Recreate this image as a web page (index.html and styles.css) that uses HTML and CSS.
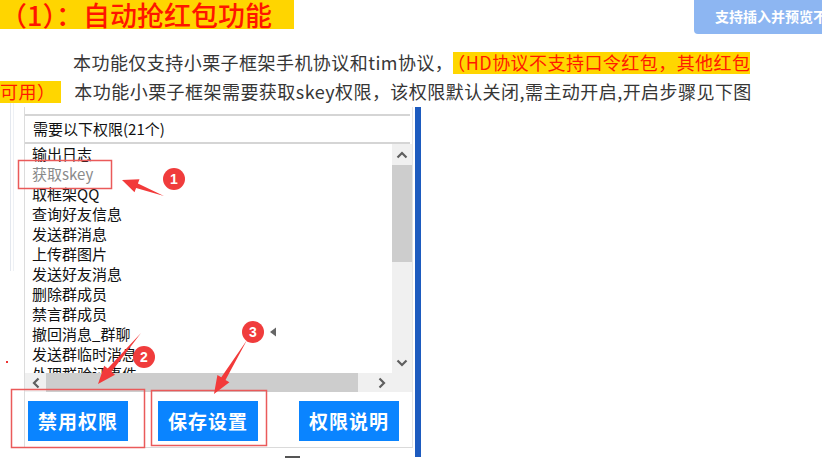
FILE: index.html
```html
<!DOCTYPE html>
<html lang="zh-CN">
<head>
<meta charset="utf-8">
<title>自动抢红包功能</title>
<link rel="stylesheet" href="styles.css">
</head>
<body>
<div class="page">
  <header class="top">
    <h1 class="title">（1）：自动抢红包功能</h1>
    <div class="preview-btn">支持插入并预览不</div>
  </header>
  <p class="intro">本功能仅支持小栗子框架手机协议和tim协议，<span class="hl">（HD协议不支持口令红包，其他红包<br>可用）</span><span class="gap"></span>本功能小栗子框架需要获取skey权限，该权限默认关闭,需主动开启,开启步骤见下图</p>
  <div class="shot">
    <div class="ghost"></div>
    <div class="panel">
      <div class="hdr">需要以下权限(21个)</div>
      <div class="listbox">
        <ul class="list">
          <li>输出日志</li>
          <li class="off">获取skey</li>
          <li>取框架QQ</li>
          <li>查询好友信息</li>
          <li>发送群消息</li>
          <li>上传群图片</li>
          <li>发送好友消息</li>
          <li>删除群成员</li>
          <li>禁言群成员</li>
          <li>撤回消息_群聊</li>
          <li>发送群临时消息</li>
          <li>处理群验证事件</li>
        </ul>
        <div class="vscroll">
          <div class="arrow-v"><svg width="12" height="8" viewBox="0 0 12 8"><polyline points="1.5,6.5 6,2 10.5,6.5" fill="none" stroke="#5f5f5f" stroke-width="2.2"/></svg></div>
          <div class="vthumb"></div>
          <div class="vfill"></div>
          <div class="arrow-v"><svg width="12" height="8" viewBox="0 0 12 8"><polyline points="1.5,1.5 6,6 10.5,1.5" fill="none" stroke="#5f5f5f" stroke-width="2.2"/></svg></div>
        </div>
        <div class="hscroll">
          <div class="arrow-h"><svg width="8" height="12" viewBox="0 0 8 12"><polyline points="6.5,1.5 2,6 6.5,10.5" fill="none" stroke="#5f5f5f" stroke-width="2.2"/></svg></div>
          <div class="hthumb"></div>
          <div class="hfill"></div>
          <div class="arrow-h"><svg width="8" height="12" viewBox="0 0 8 12"><polyline points="1.5,1.5 6,6 1.5,10.5" fill="none" stroke="#5f5f5f" stroke-width="2.2"/></svg></div>
        </div>
        <div class="corner"></div>
      </div>
      <div class="btns">
        <div class="btn">禁用权限</div>
        <div class="btn">保存设置</div>
        <div class="btn btn-wide">权限说明</div>
      </div>
    </div>
    <div class="bluebar"></div>
  </div>
  <svg class="annot" width="822" height="468" viewBox="0 0 822 468">
    <rect x="18.5" y="160.5" width="93" height="28" fill="none" stroke="#ea5a5a" stroke-width="1.5"/>
    <rect x="11.5" y="389.5" width="133" height="58" fill="none" stroke="#ea5a5a" stroke-width="1.5"/>
    <rect x="151.5" y="390.5" width="115" height="55" fill="none" stroke="#ea5a5a" stroke-width="1.5"/>
    <polygon points="122,180 139.5,179.2 137.9,183.4 164,196 136.1,188 134.5,192.2" fill="#f23a3a"/>
    <polygon points="98,384 115,374.7 111.5,371.8 141,333 107.7,368.6 104.2,365.7" fill="#f23a3a"/>
    <polygon points="214,394 229.4,382.2 225.5,379.9 247,340 221.3,377.3 217.4,375" fill="#f23a3a"/>
    <circle cx="174" cy="179" r="11" fill="#f03c3c"/>
    <circle cx="144" cy="357" r="11" fill="#f03c3c"/>
    <circle cx="253" cy="332" r="11" fill="#f03c3c"/>
    <text x="174" y="184" class="badge">1</text>
    <text x="144" y="362" class="badge">2</text>
    <text x="253" y="337" class="badge">3</text>
    <polygon points="270,332 276,327.5 276,336.5" fill="#666"/>
    <rect x="285" y="456" width="15" height="2" fill="#555"/>
    <rect x="6" y="361" width="2" height="2" fill="#e33"/>
  </svg>
</div>
</body>
</html>
```
FILE: styles.css
```css
* { box-sizing: border-box; }
html, body { margin: 0; padding: 0; background: #fff; }
body { font-family: "Noto Sans CJK SC", "Noto Sans", sans-serif; }

.page { position: relative; width: 822px; height: 468px; overflow: hidden; }

.top { display: flex; justify-content: space-between; align-items: flex-start; height: 34px; }
.title {
  margin: 0;
  display: inline-block;
  background: #ffd500;
  color: #ff1500;
  font-size: 27px;
  font-weight: 500;
  line-height: 29px;
  padding-right: 22px;
  white-space: nowrap;
}
.preview-btn {
  width: 128px;
  height: 34px;
  background: #8db6f2;
  border-radius: 0 0 0 4px;
  color: #fff;
  font-size: 14px;
  font-weight: 700;
  line-height: 32px;
  padding-left: 21px;
  white-space: nowrap;
  overflow: hidden;
}

.intro {
  margin: 14px 0 0 0;
  text-indent: 73px;
  font-size: 18px;
  letter-spacing: 0.45px;
  line-height: 29px;
  color: #363636;
  white-space: nowrap;
}
.hl {
  color: #ff1a00;
  padding-left: 3px;
  padding-right: 6px;
  background-image: linear-gradient(to bottom, transparent 3px, #ffd600 3px, #ffd600 25px, transparent 25px);
}
.gap { display: inline-block; width: 13px; }

.shot { display: flex; align-items: flex-start; margin-top: -3px; height: 357px; }
.ghost {
  margin-left: 10px;
  width: 4px;
  height: 168px;
  border-left: 1px solid #e4e8ef;
  border-right: 1px solid #eef1f5;
}
.panel {
  margin-left: 10px;
  margin-top: 4px;
  width: 389px;
  height: 341px;
  border-left: 1px solid #dcdcdc;
  border-right: 1px solid #e4e4e4;
  border-bottom: 1px solid #dadada;
  padding-top: 7px;
  display: flex;
  flex-direction: column;
}
.hdr {
  margin-right: 2px;
  border-top: 2px solid #d5d5d5;
  border-bottom: 2px solid #d5d5d5;
  height: 30px;
  line-height: 25px;
  padding-left: 8px;
  font-size: 15px;
  color: #111;
}
.listbox {
  display: grid;
  grid-template-columns: 367px 20px;
  grid-template-rows: 229px 19px;
}
.list {
  margin: 0;
  padding: 0 0 0 7px;
  list-style: none;
  overflow: hidden;
  font-size: 15px;
  line-height: 20px;
  color: #111;
  background: #fff;
}
.list .off { color: #8a8a8a; }
.vscroll { background: #f0f0f0; display: flex; flex-direction: column; }
.arrow-v { height: 21px; display: flex; align-items: center; justify-content: center; }
.vthumb { height: 97px; background: #cdcdcd; }
.vfill { flex: 1; }
.hscroll { background: #f0f0f0; display: flex; align-items: stretch; }
.arrow-h { width: 21px; display: flex; align-items: center; justify-content: center; }
.hthumb { width: 312px; background: #cdcdcd; }
.hfill { flex: 1; }
.corner { background: #f0f0f0; }

.btns { display: flex; padding: 9px 0 0 3px; }
.btn {
  width: 100px;
  height: 40px;
  background: #0a84ff;
  color: #fff;
  font-size: 19px;
  font-weight: 700;
  letter-spacing: 1px;
  line-height: 40px;
  text-align: center;
}
.btn + .btn { margin-left: 30px; }
.btn + .btn-wide { margin-left: 41px; }

.bluebar {
  margin-left: 2px;
  margin-top: 4px;
  width: 6px;
  height: 350px;
  background: #1d5bbf;
}

.annot { position: absolute; left: 0; top: 0; pointer-events: none; }
.badge {
  fill: #fff;
  font-family: "Liberation Sans", sans-serif;
  font-size: 14px;
  font-weight: 700;
  text-anchor: middle;
}
```
